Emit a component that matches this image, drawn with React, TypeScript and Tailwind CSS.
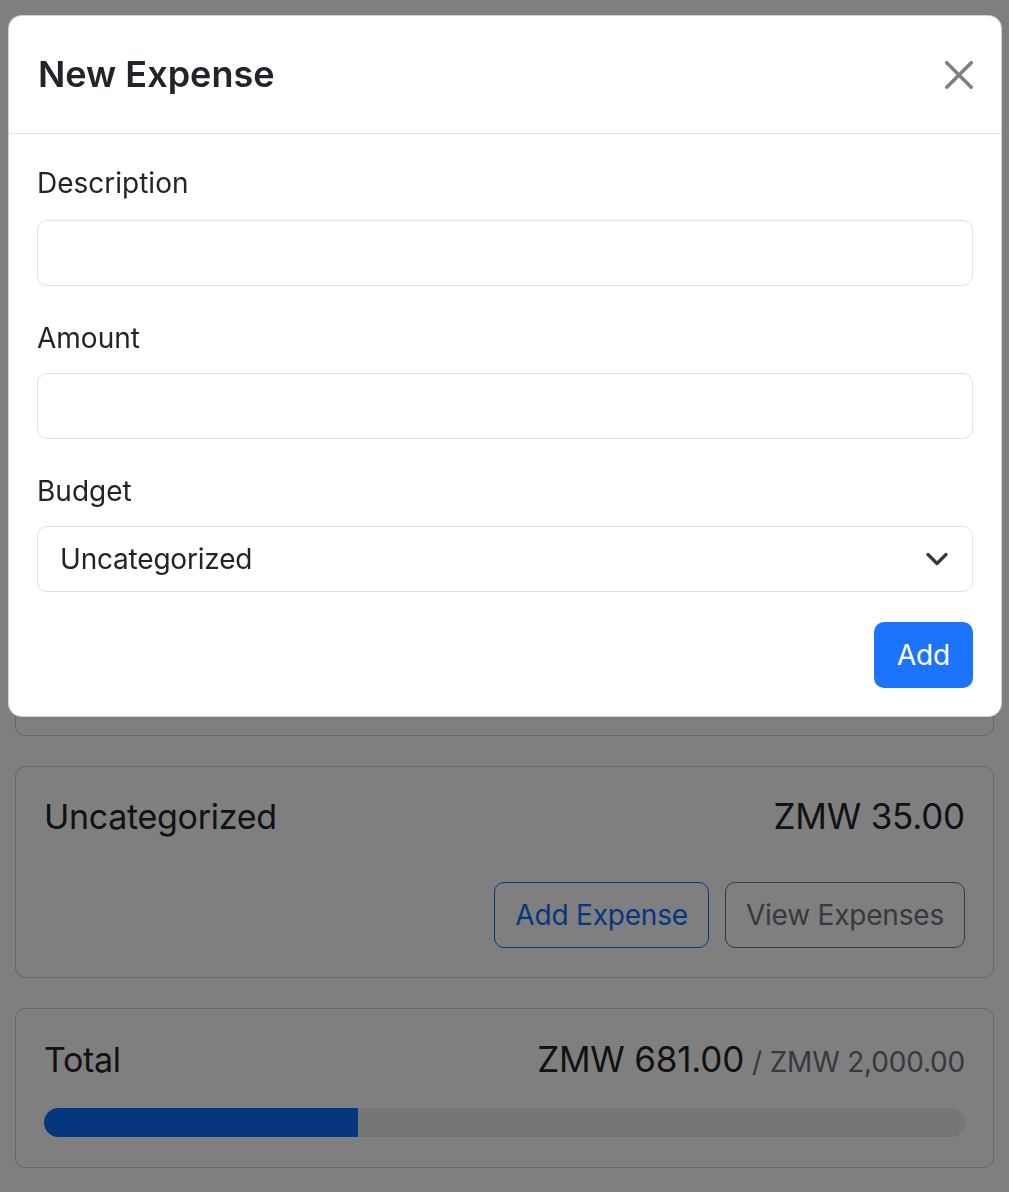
import { useState } from 'react';

const font = "font-['Inter','Liberation_Sans',sans-serif]";

export default function App() {
  const [description, setDescription] = useState('');
  const [amount, setAmount] = useState('');

  return (
    <div className={`${font} min-h-screen bg-white`}>
      {/* Page behind the modal */}
      <div className="flex flex-col gap-[30px] px-[15px] pt-[196px] pb-[26px]">
        <div className="h-[255px] rounded-[10px] border border-black/[0.175] bg-white p-[28px]">
          <div className="mt-[72px] h-[28px] overflow-hidden rounded-full bg-[#e9ecef]">
            <div className="h-full w-[42%] bg-[#0d6efd]" />
          </div>
        </div>
        <div className="h-[255px] rounded-[10px] border border-black/[0.175] bg-white p-[28px]">
          <div className="mt-[72px] h-[28px] overflow-hidden rounded-full bg-[#e9ecef]">
            <div className="h-full w-[23%] bg-[#0d6efd]" />
          </div>
        </div>

        <div className="rounded-[10px] border border-black/[0.175] bg-white px-[28px] pt-[28px] pb-[29px]">
          <div className="flex items-baseline justify-between">
            <span className="text-[34px] leading-[42px] tracking-[-0.3px] text-[#212529]">Uncategorized</span>
            <span className="text-[35px] leading-[42px] tracking-[-0.2px] text-[#212529]">ZMW 35.00</span>
          </div>
          <div className="mt-[44px] flex justify-end gap-[16px]">
            <button type="button" className="h-[66px] rounded-[10px] border border-[#0d6efd] px-[20px] text-[28px] tracking-[-0.2px] text-[#0d6efd]">
              Add Expense
            </button>
            <button type="button" className="h-[66px] rounded-[10px] border border-[#6c757d] px-[20px] text-[28px] tracking-[-0.2px] text-[#6c757d]">
              View Expenses
            </button>
          </div>
        </div>

        <div className="rounded-[10px] border border-black/[0.175] bg-white px-[28px] pt-[29px] pb-[30px]">
          <div className="flex items-baseline justify-between">
            <span className="text-[34px] leading-[42px] tracking-[-0.3px] text-[#212529]">Total</span>
            <span className="text-[35px] leading-[42px] tracking-[-0.2px] text-[#212529]">
              ZMW 681.00
              <span className="ml-[8px] text-[28px] text-[#6c757d]">/ ZMW 2,000.00</span>
            </span>
          </div>
          <div className="mt-[25px] h-[29px] overflow-hidden rounded-full bg-[#e9ecef]">
            <div className="h-full bg-[#0d6efd]" style={{ width: `${(681 / 2000) * 100}%` }} />
          </div>
        </div>
      </div>

      {/* Backdrop + modal */}
      <div className="fixed inset-0 bg-black/50 pt-[15px] pl-[8px] pr-[7px]">
        <div className="rounded-[14px] border border-black/[0.175] bg-white">
          <div className="flex h-[118px] items-center justify-between border-b border-[#dee2e6] pl-[29px] pr-[28px]">
            <h5 className="text-[36px] font-semibold leading-[1.2] text-[#212529]">New Expense</h5>
            <button type="button" aria-label="Close" className="flex h-[28px] w-[28px] items-center justify-center">
              <svg viewBox="0 0 16 16" width="28" height="28" fill="#000" fillOpacity="0.5">
                <path d="M.293.293a1 1 0 0 1 1.414 0L8 6.586 14.293.293a1 1 0 1 1 1.414 1.414L9.414 8l6.293 6.293a1 1 0 0 1-1.414 1.414L8 9.414l-6.293 6.293a1 1 0 0 1-1.414-1.414L6.586 8 .293 1.707a1 1 0 0 1 0-1.414z" />
              </svg>
            </button>
          </div>

          <form className="px-[28px] pt-[28px] pb-[28px]" onSubmit={(e) => e.preventDefault()}>
            <label className="mb-[16px] block text-[28px] leading-[1.5] text-[#212529]">Description</label>
            <input
              value={description}
              onChange={(e) => setDescription(e.target.value)}
              className="mb-[31px] block h-[66px] w-full rounded-[10px] border border-[#dee2e6] px-[21px] text-[28px] text-[#212529] outline-none"
            />

            <label className="mb-[14px] block text-[28px] leading-[1.5] text-[#212529]">Amount</label>
            <input
              value={amount}
              onChange={(e) => setAmount(e.target.value)}
              className="mb-[31px] block h-[66px] w-full rounded-[10px] border border-[#dee2e6] px-[21px] text-[28px] text-[#212529] outline-none"
            />

            <label className="mb-[14px] block text-[28px] leading-[1.5] text-[#212529]">Budget</label>
            <div className="flex h-[66px] w-full items-center justify-between rounded-[10px] border border-[#dee2e6] pl-[22px] pr-[23px]">
              <span className="text-[28px] tracking-[-0.2px] text-[#212529]">Uncategorized</span>
              <svg viewBox="0 0 16 16" width="24" height="24" fill="none" stroke="#343a40" strokeWidth="2.2" strokeLinecap="round" strokeLinejoin="round">
                <path d="m2 5 6 6 6-6" />
              </svg>
            </div>

            <div className="mt-[30px] flex justify-end">
              <button type="submit" className="h-[66px] rounded-[10px] bg-[#1c74fc] px-[23px] text-[28px] tracking-[-0.2px] text-white">
                Add
              </button>
            </div>
          </form>
        </div>
      </div>
    </div>
  );
}
